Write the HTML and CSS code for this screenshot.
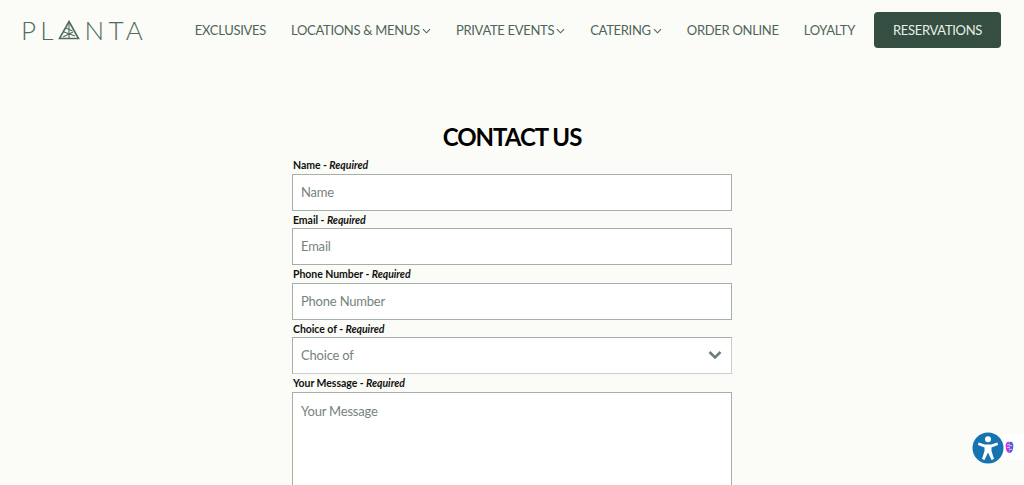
FILE: index.html
```html
<!DOCTYPE html>
<html lang="en">
<head>
    <meta charset="UTF-8">
    <meta name="viewport" content="width=device-width, initial-scale=1.0">
    <title>Contact Us | Planta</title>
    <link rel="stylesheet" href="styles.css">
</head>
<body>

<header class="site-header">
    <a class="logo" href="#">
        <span>PL</span>
        <svg class="logo-mark" viewBox="0 0 22 20" width="22" height="20" aria-hidden="true">
            <path d="M11 1.5 L20.5 18.5 H1.5 Z" fill="none" stroke="#4f6b5e" stroke-width="1.6"/>
            <path d="M11 3 L11 18 M6 12 L17 16 M8 8 L14.500 11 M5 17 L15 12" fill="none" stroke="#4f6b5e" stroke-width="1.1"/>
        </svg>
        <span>NTA</span>
    </a>
    <nav class="main-nav">
        <a href="#">EXCLUSIVES</a>
        <a href="#">LOCATIONS &amp; MENUS<svg class="caret" viewBox="0 0 10 6" width="9" height="6"><path d="M1 1 L5 5 L9 1" fill="none" stroke="#4f6459" stroke-width="1.200"/></svg></a>
        <a href="#">PRIVATE EVENTS<svg class="caret" viewBox="0 0 10 6" width="9" height="6"><path d="M1 1 L5 5 L9 1" fill="none" stroke="#4f6459" stroke-width="1.200"/></svg></a>
        <a href="#">CATERING<svg class="caret" viewBox="0 0 10 6" width="9" height="6"><path d="M1 1 L5 5 L9 1" fill="none" stroke="#4f6459" stroke-width="1.200"/></svg></a>
        <a href="#">ORDER ONLINE</a>
        <a href="#">LOYALTY</a>
    </nav>
    <a class="reserve-btn" href="#">RESERVATIONS</a>
</header>

<main class="contact">
    <h1>CONTACT US</h1>
    <form class="contact-form">
        <label for="name">Name - <em>Required</em></label>
        <input type="text" id="name" placeholder="Name">

        <label for="email">Email - <em>Required</em></label>
        <input type="text" id="email" placeholder="Email">

        <label for="phone">Phone Number - <em>Required</em></label>
        <input type="text" id="phone" placeholder="Phone Number">

        <label for="choice">Choice of - <em>Required</em></label>
        <div class="select-box" id="choice">
            <span>Choice of</span>
            <svg viewBox="0 0 14 10" width="14" height="10" aria-hidden="true"><path d="M1.500 2 L7 7.500 L12.500 2" fill="none" stroke="#6f7f78" stroke-width="2.600"/></svg>
        </div>

        <label for="message">Your Message - <em>Required</em></label>
        <textarea id="message" placeholder="Your Message"></textarea>
    </form>
</main>

<!-- accessibility widget -->
<div class="a11y-widget">
    <div class="a11y-tab">
        <svg viewBox="0 0 12 14" width="11" height="13" aria-hidden="true">
            <path d="M6 1 C3 0 1 3 2 7 C2 11 4 13 6 13 Z" fill="#c23bd8"/>
            <path d="M6 1 C9 0 11 3 10 7 C10 11 8 13 6 13 Z" fill="#4a5be8"/>
            <path d="M3.500 4 H6 M3.500 7 H6 M6 5 H9 M6 9 H9" stroke="#fff" stroke-width="0.800"/>
        </svg>
    </div>
    <div class="a11y-btn">
        <svg viewBox="0 0 32 32" width="32" height="32" aria-hidden="true">
            <circle cx="16" cy="16" r="15.500" fill="#1573b0"/>
            <circle cx="16" cy="7.300" r="3" fill="#fff"/>
            <path d="M6.500 10.500 L13 12.500 H19 L25.500 10.500 L26 13 L19.500 15.500 V19 L22 27 L19.500 28 L16 20.500 L12.500 28 L10 27 L12.500 19 V15.500 L6 13 Z" fill="#fff"/>
        </svg>
    </div>
</div>

</body>
</html>
```

FILE: styles.css
```css
html, body {
    height: 100%;
    overflow: hidden;
}
body {
    margin: 0;
    background-color: #fbfcf7;
    font-family: "Lato", "Open Sans", sans-serif;
    color: #000;
}
a {
    text-decoration: none;
    color: inherit;
}

.site-header {
    display: flex;
    align-items: center;
    height: 60px;
    padding: 0 23px;
}
.logo {
    display: flex;
    align-items: center;
    margin-left: -2px;
    font-size: 26px;
    font-weight: 300;
    letter-spacing: 4.200px;
    color: #4f6b5e;
}
.logo-mark {
    margin: 0 5px 0 0;
}
.main-nav {
    display: flex;
    align-items: center;
    gap: 25px;
    margin-left: auto;
    font-size: 13px;
    letter-spacing: -0.300px;
    white-space: nowrap;
    color: #4f6459;
}
.caret {
    margin-left: 2px;
    vertical-align: 1px;
}
.reserve-btn {
    margin-left: 19px;
    width: 127px;
    height: 36px;
    line-height: 36px;
    text-align: center;
    background-color: #344e41;
    border-radius: 4px;
    color: #e8efe9;
    font-size: 13px;
    letter-spacing: -0.300px;
    white-space: nowrap;
}

.contact {
    width: 440px;
    margin: 0 auto;
}
.contact h1 {
    margin: 61px 0 0;
    height: 35px;
    line-height: 32px;
    text-align: center;
    font-size: 24px;
    font-weight: 700;
    letter-spacing: -1px;
}
.contact-form {
    display: flex;
    flex-direction: column;
}
.contact-form label {
    height: 17.500px;
    line-height: 18px;
    padding-left: 1px;
    font-size: 10.500px;
    font-weight: 700;
    letter-spacing: -0.050px;
    color: #111;
}
.contact-form em {
    font-style: italic;
}
.contact-form input,
.contact-form textarea,
.select-box {
    box-sizing: border-box;
    width: 100%;
    height: 37px;
    margin: 0;
    padding: 0 8px 1px;
    background: #fff;
    border: 1px solid #a4b1ab;
    border-radius: 0;
    font-family: inherit;
    font-size: 13px;
    letter-spacing: -0.200px;
    color: #77827d;
    outline: none;
}
.contact-form input::placeholder,
.contact-form textarea::placeholder {
    color: #77827d;
    opacity: 1;
}
.select-box {
    display: flex;
    align-items: center;
    justify-content: space-between;
    padding-right: 9px;
    border-right-color: #c8d0cb;
    border-bottom-color: #c8d0cb;
}
.contact-form textarea {
    height: 180px;
    padding-top: 10px;
    resize: none;
}

.a11y-widget {
    position: fixed;
    right: 0;
    bottom: 25px;
    display: flex;
    align-items: center;
}
.a11y-btn {
    position: absolute;
    right: 20px;
    top: -2px;
    width: 32px;
    height: 32px;
}
.a11y-tab {
    display: flex;
    align-items: center;
    width: 22px;
    height: 26px;
    padding-left: 2px;
    box-sizing: border-box;
    background: #fff;
    border-radius: 4px 0 0 4px;
}
```
